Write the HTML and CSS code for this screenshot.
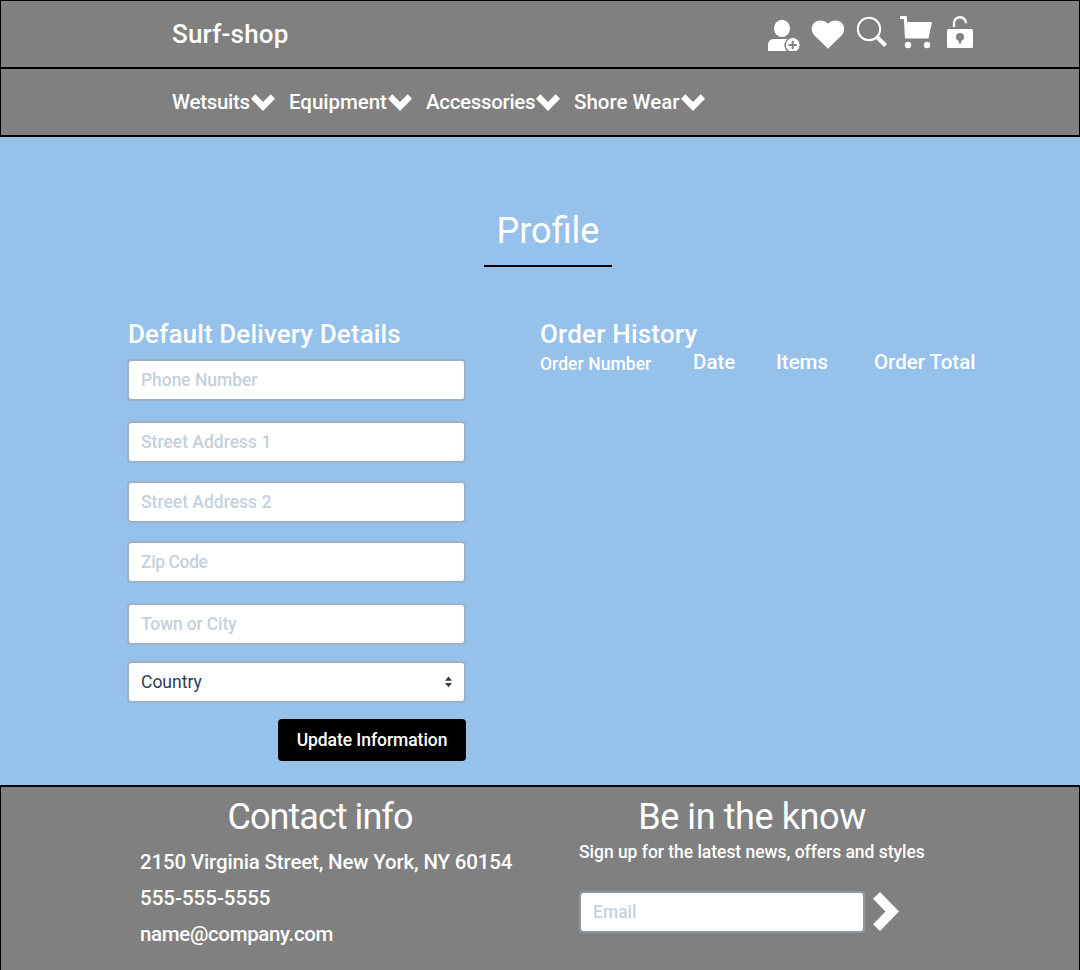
FILE: index.html
```html
<!DOCTYPE html>
<html lang="en">
<head>
<meta charset="utf-8">
<title>Surf-shop</title>
<link rel="stylesheet" href="styles.css">
</head>
<body>
<header class="topbar">
  <a class="brand">Surf-shop</a>
  <div class="icons">
    <svg class="user" width="36" height="36" viewBox="0 0 36 36"><ellipse cx="15" cy="13.4" rx="8" ry="8.6"/><path d="M1 36V30Q1 24.500 7 24H21Q17 27 17.500 31.500Q18 34.500 19.500 36Z"/><circle class="halo" cx="25.700" cy="30" r="7.500"/><path class="cut" d="M25.700 26v8M21.700 30h8"/></svg>
    <svg width="36" height="36" viewBox="0 0 36 36"><path d="M18 33.700L4.500 20.500C-1 14 2.500 5.500 10 5.500C14 5.500 16.500 7 18 8.800C19.500 7 22 5.500 26 5.500C33.500 5.500 37 14 31.500 20.500Z"/></svg>
    <svg width="36" height="36" viewBox="0 0 36 36"><circle class="ring" cx="15" cy="14" r="11.200"/><path class="handle" d="M22.500 21.500L31.500 30.500"/></svg>
    <svg width="36" height="36" viewBox="0 0 36 36"><path d="M2 1H8.700L9.300 7H34L30.500 23.500H7L5.800 4H2Z"/><circle cx="10" cy="30" r="3.200"/><circle cx="29" cy="30" r="3.200"/></svg>
    <svg width="36" height="36" viewBox="0 0 36 36"><rect x="5" y="14" width="26" height="19" rx="1.500"/><path class="shackle" d="M12 12V8.200A6 6 0 0 1 24 8.200"/><circle class="hole" cx="18" cy="22" r="4"/><path class="hole" d="M16.800 24h2.400v4.500h-2.400z"/></svg>
  </div>
</header>
<nav class="menu">
  <a class="menu-item wetsuits"><span>Wetsuits</span><svg class="chev" viewBox="0 0 24 17"><path d="M0 4.800L4.300 .3L12 8L19.700 .3L24 4.800L12 17Z"/></svg></a>
  <a class="menu-item equipment"><span>Equipment</span><svg class="chev" viewBox="0 0 24 17"><path d="M0 4.800L4.300 .3L12 8L19.700 .3L24 4.800L12 17Z"/></svg></a>
  <a class="menu-item accessories"><span>Accessories</span><svg class="chev" viewBox="0 0 24 17"><path d="M0 4.800L4.300 .3L12 8L19.700 .3L24 4.800L12 17Z"/></svg></a>
  <a class="menu-item"><span>Shore Wear</span><svg class="chev" viewBox="0 0 24 17"><path d="M0 4.800L4.300 .3L12 8L19.700 .3L24 4.800L12 17Z"/></svg></a>
</nav>
<main class="page">
  <h1 class="title">Profile</h1>
  <div class="columns">
    <form class="details">
      <h2 class="subhead delivery">Default Delivery Details</h2>
      <div class="field phone">Phone Number</div>
      <div class="field">Street Address 1</div>
      <div class="field">Street Address 2</div>
      <div class="field zip">Zip Code</div>
      <div class="field town">Town or City</div>
      <div class="field select"><span>Country</span><svg width="7" height="12" viewBox="0 0 7 12"><path d="M0 4.800L3.500 .5L7 4.800ZM0 7L3.500 11.300L7 7Z"/></svg></div>
      <button class="update" type="button">Update Information</button>
    </form>
    <section class="orders">
      <h2 class="subhead">Order History</h2>
      <div class="order-head"><span class="number">Order Number</span><span>Date</span><span>Items</span><span>Order Total</span></div>
    </section>
  </div>
</main>
<footer class="footer">
  <section class="contact">
    <h2 class="foot-title contact-title">Contact info</h2>
    <p class="address">2150 Virginia Street, New York, NY 60154</p>
    <p>555-555-5555</p>
    <p class="mail">name@company.com</p>
  </section>
  <section class="news">
    <h2 class="foot-title news-title">Be in the know</h2>
    <p class="pitch">Sign up for the latest news, offers and styles</p>
    <div class="signup"><div class="field email">Email</div><svg class="send" width="26" height="39" viewBox="0 0 26 39"><path d="M0 6.800L7 0L26 19.500L7 39L0 32.200L12.500 19.500Z"/></svg></div>
  </section>
</footer>
</body>
</html>
```
FILE: styles.css
```css
* { box-sizing: border-box; }
body { margin: 0; width: 1080px; height: 970px; overflow: hidden; background: #95c1ea; color: #fff; font-family: Roboto, "Liberation Sans", sans-serif; font-weight: 500; white-space: nowrap; }
h1, h2, p { margin: 0; font-weight: 500; }
svg { display: block; flex: none; fill: #fff; }

.topbar { height: 68px; border: 1px solid #000; background: #808080; display: flex; justify-content: space-between; padding: 0 101px 0 171px; }
.brand { font-size: 26px; line-height: 66px; letter-spacing: .2px; }
.icons { display: flex; gap: 8px; padding-top: 14px; }
.user { margin-right: -1px; }
.halo { stroke: #808080; stroke-width: 1.2; }
.cut { stroke: #808080; stroke-width: 2; }
.ring { fill: none; stroke: #fff; stroke-width: 2; }
.handle { stroke: #fff; stroke-width: 4; }
.shackle { fill: none; stroke: #fff; stroke-width: 2.4; }
.hole { fill: #808080; }

.menu { height: 69px; border: 1px solid #000; border-bottom-width: 2px; background: #808080; display: flex; gap: 13px; padding-left: 171px; font-size: 20.5px; line-height: 66px; }
.menu-item { display: flex; align-items: center; gap: 1px; }
.wetsuits { width: 104px; letter-spacing: -.28px; }
.equipment { width: 124px; letter-spacing: -.04px; }
.accessories { width: 135px; letter-spacing: -.32px; }
.chev { width: 24px; height: 17px; }

.page { height: 648px; padding-top: 66px; }
.title { width: 128px; height: 64px; margin-left: 484px; border-bottom: 2px solid #000; text-align: center; font-size: 36px; font-weight: 400; line-height: 56px; }
.columns { display: flex; padding: 50px 0 0 127px; }
.details { width: 339px; display: flex; flex-direction: column; }
.subhead { height: 42px; font-size: 26px; line-height: 34px; letter-spacing: .2px; }
.delivery { padding-left: 1px; letter-spacing: .12px; }
.field { height: 42px; border: 2px solid #9bb1c8; border-radius: 4px; background: #fff; background-clip: padding-box; color: #c5d1dc; font-size: 17.5px; line-height: 38px; padding: 0 12px; margin-bottom: 18px; }
.phone, .zip { margin-bottom: 20px; }
.phone { letter-spacing: -.05px; }
.zip { letter-spacing: -.4px; }
.town { margin-bottom: 16px; letter-spacing: -.14px; }
.select { display: flex; justify-content: space-between; align-items: center; color: #2f3e4e; margin-bottom: 16px; font-weight: 400; }
.select svg { fill: #2f3e4e; }
.update { align-self: flex-end; width: 188px; height: 42px; border: 0; border-radius: 4px; background: #000; color: #fff; font: 500 17.5px/42px Roboto, sans-serif; letter-spacing: -.06px; padding: 0; }
.orders { margin-left: 74px; }
.orders .subhead { height: 28px; }
.order-head { display: grid; grid-template-columns: 153px 83px 98px 110px; font-size: 20.5px; line-height: 34px; }
.number { font-size: 17.5px; line-height: 38px; letter-spacing: .06px; }

.footer { height: 185px; border: 1px solid #000; border-top-width: 2px; border-bottom: 0; background: #808080; display: flex; padding-left: 139px; font-size: 20.5px; line-height: 36px; }
.contact { width: 360px; }
.address { letter-spacing: -.16px; }
.mail { letter-spacing: -.34px; }
.foot-title { height: 57px; font-size: 36px; font-weight: 400; line-height: 60px; text-align: center; }
.contact-title { letter-spacing: -.95px; }
.news-title { letter-spacing: -.4px; }
.news { margin-left: 79px; width: 346px; }
.pitch { font-size: 17.5px; line-height: 17px; letter-spacing: -.03px; }
.signup { display: flex; gap: 8px; margin-top: 30px; }
.email { width: 286px; border-color: #8c98a4; }
.send { margin-top: 1px; }
```
